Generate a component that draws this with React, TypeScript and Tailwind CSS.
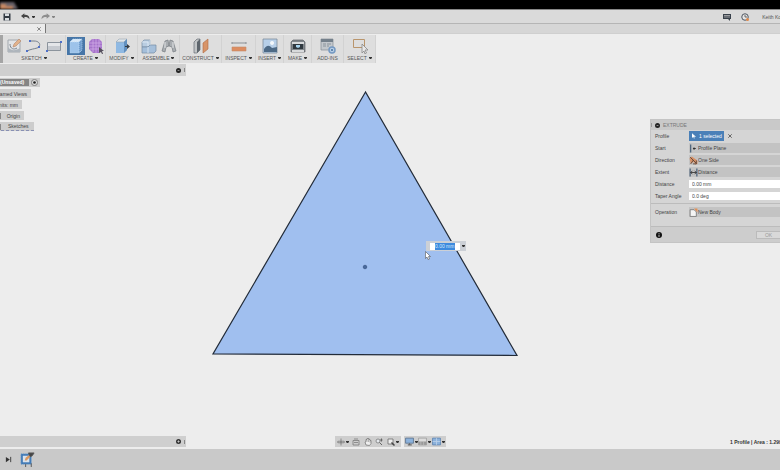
import type { ReactNode } from 'react'

const Caret = () => (
  <svg viewBox="0 0 3 2" className="w-[3px] h-[2px] shrink-0">
    <path d="M0 0h3v1L2 2H1L0 1z" fill="#333" />
  </svg>
)

const Icon = ({ children, className = 'size-4' }: { children: ReactNode; className?: string }) => (
  <svg viewBox="0 0 16 16" className={`${className} shrink-0`} fill="none">{children}</svg>
)

const icons = {
  sketch: (
    <Icon>
      <path d="M2 2h12v12H2z" fill="#e2e4e6" stroke="#a2a8ae" />
      <path d="M2 9c3 4 7 4 12 1v4H2z" fill="#aeb5bc" />
      <path d="M4 6c0 5 4 6 7 4" stroke="#7d868f" />
      <path d="m7 9 1-3 5-5 2 2-5 5z" fill="#e2b38c" stroke="#b5876a" strokeWidth=".6" />
    </Icon>
  ),
  spline: (
    <Icon>
      <path d="M4 3h4c7 0 7 6 3 7-3 1-6 1-10 3" stroke="#76818c" />
      <path d="M3 2h2v2H3zM12 8h2v2h-2zM0 12h2v2H0z" fill="#4f70c8" />
    </Icon>
  ),
  rectangle: (
    <Icon>
      <path d="M1.500 4.500h13v8h-13z" fill="#c6cad0" stroke="#8c949d" />
      <path d="M2 5h12v3H2z" fill="#e4e6e9" />
      <path d="M14 3h2v2h-2zM0 12h2v2H0z" fill="#4f70c8" />
    </Icon>
  ),
  box: (
    <Icon>
      <path d="m2 4 3-3h9v11l-3 3H2z" fill="#9dc3ea" />
      <path d="m2 4 3-3h9l-3 3z" fill="#d8e9f8" />
      <path d="m11 4 3-3v11l-3 3z" fill="#6f9dce" />
      <path d="m2 4 3-3h9v11l-3 3H2zM2 4h9v11M11 4l3-3" stroke="#bddaf4" strokeWidth=".7" strokeDasharray="1 1" />
    </Icon>
  ),
  form: (
    <Icon>
      <path d="M4 1h7l3 3v7l-3 4H5l-4-4V4z" fill="#a673cb" />
      <path d="M1 5h13M1 8h13M2 11h12M5 1v13M8 1v14M11 1v13" stroke="#d3b0ea" strokeWidth=".7" />
      <path d="M11 9v6l2-1 1 2h1l-1-3h2z" fill="#56505e" />
    </Icon>
  ),
  modify: (
    <Icon>
      <path d="m2 4 3-3h8v11l-3 3H2z" fill="#8fb9e3" />
      <path d="m2 4 3-3h8l-3 3z" fill="#dfe5ea" stroke="#9aa4ae" strokeWidth=".6" />
      <path d="m10 4 3-3v11l-3 3z" fill="#6290bf" />
      <path d="M11 8h2V6l3 2.500-3 2.500V9h-2z" fill="#353b42" />
    </Icon>
  ),
  assemble: (
    <Icon>
      <path d="m1 4 2-2h6v6l-2 1H1z" fill="#b9cde1" stroke="#758ca3" strokeWidth=".7" />
      <path d="M1 9h6l2-2h6v6l-2 2H1z" fill="#a5bfda" stroke="#758ca3" strokeWidth=".7" />
      <path d="M7 9v6M1 4h6v4M9 2v5" stroke="#e3edf7" strokeWidth=".8" />
    </Icon>
  ),
  joint: (
    <Icon>
      <path d="m1 13 3-10 3-1 1 6-3 1-1 5zM15 13 12 3 9 2 8 8l3 1 1 5z" fill="#a9adb1" stroke="#777d83" strokeWidth=".7" />
      <path d="M4 4v6M12 4v6" stroke="#e3e5e7" />
    </Icon>
  ),
  construct: (
    <Icon>
      <path d="m1 4 3-3h3v11l-3 3H1z" fill="#c2c5c7" stroke="#555d64" strokeWidth=".6" />
      <path d="M4 4 7 1v11l-3 3z" fill="#5e666d" />
      <path d="m10 5 5-4v10l-5 4z" fill="#d89468" stroke="#ae6a43" strokeWidth=".6" />
    </Icon>
  ),
  inspect: (
    <Icon>
      <path d="M1 5h14M1 4v2M15 4v2" stroke="#8b9196" />
      <path d="M1 9h14v4H1z" fill="#dc8d61" stroke="#c58a6a" strokeWidth=".6" />
    </Icon>
  ),
  insert: (
    <Icon>
      <path d="M1 1h14v14H1z" fill="#b7cfe8" stroke="#7f8e9d" strokeWidth=".8" />
      <path d="M2 11c3-4 5-4 8-1l5-1v5H2z" fill="#4d6a86" />
      <path d="M10 3a2 2 0 1 0 .1 0z" fill="#f2f7fb" />
    </Icon>
  ),
  make: (
    <Icon>
      <path d="M1 4 3 2h10l2 2v10H1z" fill="#80868b" stroke="#5e6368" strokeWidth=".7" />
      <path d="M2 4h12v2H2zM2 12h12v2H2z" fill="#d8dadc" />
      <path d="M3 6h10v5H3z" fill="#2f383f" />
      <path d="M6 7h4v2l-2 1-2-1z" fill="#a7d3ee" />
    </Icon>
  ),
  addins: (
    <Icon>
      <path d="M1 1h12v11H1z" fill="#c3c8cd" stroke="#858d95" strokeWidth=".7" />
      <path d="M1 1h12v3H1z" fill="#74808b" />
      <path d="M3 6h3M3 8h3M7 6h4M7 8h2" stroke="#8a939b" />
      <circle cx="12" cy="12" r="3" fill="#b8cee6" stroke="#7499c2" strokeWidth="1.500" />
      <circle cx="12" cy="12" r="1" fill="#47719d" />
    </Icon>
  ),
  select: (
    <Icon>
      <path d="M1.500 1.500h11v8h-11z" stroke="#b9956c" />
      <path d="M10 6v9l2-2 1 3 1.500-1L13 12h3z" fill="#e8e8e8" stroke="#888" strokeWidth=".8" />
    </Icon>
  ),
}

type Group = { label: string; width: string; tools: { name: string; icon: ReactNode; active?: boolean }[] }

const groups: Group[] = [
  {
    label: 'SKETCH',
    width: 'w-[63px]',
    tools: [
      { name: 'Create Sketch', icon: icons.sketch },
      { name: 'Spline', icon: icons.spline },
      { name: 'Rectangle', icon: icons.rectangle },
    ],
  },
  {
    label: 'CREATE',
    width: 'w-10',
    tools: [
      { name: 'Extrude', icon: icons.box, active: true },
      { name: 'Create Form', icon: icons.form },
    ],
  },
  { label: 'MODIFY', width: 'w-8', tools: [{ name: 'Press Pull', icon: icons.modify }] },
  {
    label: 'ASSEMBLE',
    width: 'w-[42px]',
    tools: [
      { name: 'New Component', icon: icons.assemble },
      { name: 'Joint', icon: icons.joint },
    ],
  },
  { label: 'CONSTRUCT', width: 'w-[42px]', tools: [{ name: 'Offset Plane', icon: icons.construct }] },
  { label: 'INSPECT', width: 'w-[34px]', tools: [{ name: 'Measure', icon: icons.inspect }] },
  { label: 'INSERT', width: 'w-7', tools: [{ name: 'Decal', icon: icons.insert }] },
  { label: 'MAKE', width: 'w-7', tools: [{ name: '3D Print', icon: icons.make }] },
  { label: 'ADD-INS', width: 'w-8', tools: [{ name: 'Scripts', icon: icons.addins }] },
  { label: 'SELECT', width: 'w-8', tools: [{ name: 'Select', icon: icons.select }] },
]

const Toolbar = () => (
  <nav className="flex self-start h-7 mt-px bg-[#dedede] shrink-0 pointer-events-auto">
    <div className="w-[3px] bg-[#a5a5a5]" />
    {groups.map((g) => (
      <div key={g.label} className={`${g.width} flex flex-col items-center justify-between pt-[2px] pb-[2px] border-r border-[#d2d2d2]`}>
        <div className="flex justify-center gap-[2px]">
          {g.tools.map((t) => (
            <button
              key={t.name}
              aria-label={t.name}
              className={`flex items-center justify-center h-[18px] w-[18px] ${t.active ? 'bg-[#4676a8]' : ''}`}
            >
              {t.icon}
            </button>
          ))}
        </div>
        <button className="flex items-center gap-[2px] leading-[6px] text-[#555]">
          {g.label}
          {g.label !== 'ADD-INS' && <Caret />}
        </button>
      </div>
    ))}
  </nav>
)

const PanelBar = ({ label, icon, className }: { label: string; icon: ReactNode; className: string }) => (
  <div className={`${className} flex items-center justify-end bg-[#cfcfcf] pr-px gap-[3px]`}>
    <button aria-label={label}>{icon}</button>
    <div className="w-px h-1 bg-[#888]" />
  </div>
)

const Chip = ({ width, children }: { width: string; children: ReactNode }) => (
  <div className={`${width} flex items-center justify-end h-[9px] overflow-hidden whitespace-nowrap bg-[#cdcdcd]`}>
    {children}
  </div>
)

const Browser = () => (
  <section>
    <PanelBar
      label="Browser options"
      className="h-3"
      icon={
        <Icon className="size-[5px]">
          <circle cx="8" cy="8" r="8" fill="#222" />
          <path d="M5 8h6" stroke="#ccc" strokeWidth="2" />
        </Icon>
      }
    />
    <div className="flex flex-col gap-[2px] pt-[2px]">
      <Chip width="w-10">
        <span className="w-[29px] h-[7px] leading-[7px] bg-[#858585] text-white font-bold">(Unsaved)</span>
        <button aria-label="Activate component" className="mx-[2px]">
          <Icon className="size-[7px]">
            <circle cx="8" cy="8" r="7" fill="#ddd" stroke="#777" strokeWidth="2" />
            <circle cx="8" cy="8" r="3" fill="#222" />
          </Icon>
        </button>
      </Chip>
      <Chip width="w-[31px]"><span className="pr-1">Named Views</span></Chip>
      <Chip width="w-[22px]"><span className="pr-1">Units: mm</span></Chip>
      <Chip width="w-6">
        <span className="mr-auto w-px h-[6px] bg-[#888]" />
        <span className="pr-1">Origin</span>
      </Chip>
      <Chip width="w-[34px]">
        <span className="mr-auto w-px h-[6px] bg-[#888]" />
        <span className="w-full pl-[7px] leading-[8px] border-b border-dashed border-[#8890b4]">Sketches</span>
      </Chip>
    </div>
  </section>
)

const SketchCanvas = () => (
  <svg className="absolute inset-0 w-full h-full" fill="none">
    <path d="M365.500 58 213 320l304 1.500z" fill="#a0bfef" stroke="#222b38" strokeWidth="1.200" />
    <circle cx="365" cy="233" r="1.800" fill="#48699c" stroke="#2f4a78" strokeWidth=".6" />
  </svg>
)

const DimensionInput = () => (
  <div className="absolute left-[426px] top-[207px]">
    <div className="flex items-center h-[10px] w-10 bg-[#ccd0d6] pl-1 pr-px gap-[2px]">
      <div className="flex-1 h-[7px] bg-white px-[5px]">
        <input
          aria-label="Distance on canvas"
          defaultValue="0.00 mm"
          className="block w-full h-[7px] leading-[7px] bg-[#3d8ade] text-[#d7e9fb] outline-none"
        />
      </div>
      <button aria-label="Expression options"><Caret /></button>
    </div>
    <svg viewBox="0 0 6 9" className="w-[6px] h-[9px] -ml-px">
      <path d="M.5.500v7l1.500-1.500 1 2.500 1.500-.5-1-2.500h2z" fill="#fff" stroke="#555" strokeWidth=".6" />
    </svg>
  </div>
)

const startIcon = (
  <Icon className="size-[9px]">
    <path d="M3 1v14" stroke="#3f5873" strokeWidth="2" />
    <path d="M7 8h5M9 6v4" stroke="#333" strokeWidth="2" />
  </Icon>
)
const directionIcon = (
  <Icon className="size-[9px]">
    <path d="m1 4 4-3 10 7v6l-4 1-3-5-5 4z" fill="#d79167" />
    <path d="m2 2 11 11M3 14l5-7M13 8v6H7" stroke="#55433a" strokeWidth="1.500" />
  </Icon>
)
const extentIcon = (
  <Icon className="size-[9px]">
    <path d="M2 1v14M14 1v14" stroke="#3f5873" strokeWidth="2" />
    <path d="M3 8h10M6 5 3 8l3 3M10 5l3 3-3 3" stroke="#333" strokeWidth="1.500" />
  </Icon>
)
const bodyIcon = (
  <Icon className="size-[9px]">
    <path d="M2 3h7l4 4v8H2z" fill="#f5f5f5" stroke="#777" strokeWidth="1.500" />
    <path d="M9 1h6v7z" fill="#e39056" />
  </Icon>
)

const Row = ({ id, label, children }: { id: string; label: string; children: ReactNode }) => (
  <div className="flex items-center h-3 pl-1">
    <label htmlFor={id} className="w-[34px] shrink-0">{label}</label>
    {children}
  </div>
)

const Choice = ({ id, label, value, icon }: { id: string; label: string; value: string; icon: ReactNode }) => (
  <Row id={id} label={label}>
    <div className="flex flex-1 items-center h-[10px] bg-[#c3c3c3]">
      {icon}
      <select id={id} className="flex-1 appearance-none h-[10px] leading-[10px] outline-none">
        <option>{value}</option>
      </select>
    </div>
  </Row>
)

const Field = ({ id, label, value }: { id: string; label: string; value: string }) => (
  <Row id={id} label={label}>
    <input id={id} defaultValue={value} className="flex-1 min-w-0 h-2 pl-[3px] leading-[8px] bg-white outline-none" />
  </Row>
)

const ExtrudeDialog = () => (
  <form className="w-[130px] mt-[55px] bg-[#d5d5d5] border border-r-0 border-[#c4c4c4] pointer-events-auto">
    <h2 className="flex items-center h-[10px] gap-[3px] bg-[#c9c9c9] text-[#777]">
      <span className="w-px h-1 bg-[#999]" />
      <Icon className="size-[5px]">
        <circle cx="8" cy="8" r="8" fill="#222" />
        <path d="M5 8h6" stroke="#ccc" strokeWidth="2" />
      </Icon>
      EXTRUDE
    </h2>
    <Row id="profile" label="Profile">
      <button id="profile" type="button" className="flex items-center gap-[3px] w-[35px] h-[10px] pl-[3px] bg-[#4a80b8] text-white whitespace-nowrap">
        <svg viewBox="0 0 6 8" className="w-1 h-[6px]"><path d="M0 0v7l2-2 1 3 1-1-1-2h3z" fill="#fff" /></svg>
        1 selected
      </button>
      <button type="button" aria-label="Clear selection" className="ml-1">
        <Icon className="size-1"><path d="m1 1 14 14M15 1 1 15" stroke="#444" strokeWidth="3" /></Icon>
      </button>
    </Row>
    <Choice id="start" label="Start" value="Profile Plane" icon={startIcon} />
    <Choice id="direction" label="Direction" value="One Side" icon={directionIcon} />
    <Choice id="extent" label="Extent" value="Distance" icon={extentIcon} />
    <Field id="distance" label="Distance" value="0.00 mm" />
    <Field id="taper" label="Taper Angle" value="0.0 deg" />
    <div className="mt-px pt-[2px] pb-2 border-t border-[#bcbcbc]">
      <Choice id="operation" label="Operation" value="New Body" icon={bodyIcon} />
    </div>
    <div className="flex items-center justify-between h-4 pl-[5px] bg-[#cdcdcd] border-t border-[#bcbcbc]">
      <button type="button" aria-label="Information">
        <Icon className="size-[6px]">
          <circle cx="8" cy="8" r="8" fill="#111" />
          <path d="M8 3v2M8 7v6" stroke="#fff" strokeWidth="2" />
        </Icon>
      </button>
      <button type="button" disabled className="w-6 h-2 leading-[6px] bg-[#d9d9d9] border border-r-0 border-[#bbb] text-[#999]">OK</button>
    </div>
  </form>
)

const viewTools = [
  {
    name: 'Orbit',
    caret: true,
    icon: <Icon className="size-2"><path d="M8 1v14M1 8h14M4 5 1 8l3 3M12 5l3 3-3 3" stroke="#777" strokeWidth="1.500" /><circle cx="8" cy="8" r="3" fill="#888" /></Icon>,
  },
  {
    name: 'Look At',
    icon: <Icon className="size-2"><path d="M2 5h12v9H2zM4 2h8M4 9h8" stroke="#777" strokeWidth="1.500" /></Icon>,
  },
  {
    name: 'Pan',
    icon: <Icon className="size-2"><path d="M4 14 2 8l2-1V3h2V1h4v2h2v2h2v6l-3 4z" fill="#eee" stroke="#777" strokeWidth="1.500" /><path d="M6 3v5M9 2v6M12 5v4" stroke="#777" /></Icon>,
  },
  {
    name: 'Zoom',
    icon: <Icon className="size-2"><circle cx="6" cy="6" r="4" fill="#e4e8ec" stroke="#777" strokeWidth="1.500" /><path d="m9 9 5 5M13 1v6M10 4h5" stroke="#666" strokeWidth="2" /></Icon>,
  },
  {
    name: 'Fit',
    caret: true,
    icon: <Icon className="size-2"><path d="M2 2h10v10H2z" fill="#eee" stroke="#666" strokeWidth="1.500" /><path d="m9 9 6 6" stroke="#444" strokeWidth="3" /></Icon>,
  },
]

const displayTools = [
  {
    name: 'Display Settings',
    icon: <Icon className="size-[9px]"><path d="M1 2h14v9H1z" fill="#8cb2dc" stroke="#5c7490" strokeWidth="1.500" /><path d="M5 14h7M8 11v3" stroke="#666" strokeWidth="2" /></Icon>,
  },
  {
    name: 'Grid and Snaps',
    icon: <Icon className="size-[9px]"><path d="M1 2h14v12H1z" fill="#ddd" stroke="#888" /><path d="M1 8h14v6H1z" fill="#999" /><path d="M5 8v6M10 8v6" stroke="#ccc" /></Icon>,
  },
  {
    name: 'Viewports',
    icon: <Icon className="size-[9px]"><path d="M1 2h14v12H1z" fill="#8cb2dc" stroke="#5f86b4" strokeWidth="1.500" /><path d="M8 2v12M1 8h14" stroke="#b9d0ea" strokeWidth="1.500" /></Icon>,
  },
]

const NavigationBar = () => (
  <div className="flex gap-[3px] h-[11px] pointer-events-auto">
    <div className="flex items-center justify-between w-[66px] px-[2px] bg-[#cecece]">
      {viewTools.map((t) => (
        <button key={t.name} aria-label={t.name} className="flex items-center gap-px">
          {t.icon}
          {t.caret && <Caret />}
        </button>
      ))}
    </div>
    <div className="flex items-center justify-between w-[42px] px-px bg-[#cecece]">
      {displayTools.map((t) => (
        <button key={t.name} aria-label={t.name} className="flex items-center gap-px">
          {t.icon}
          <Caret />
        </button>
      ))}
    </div>
  </div>
)

const QuickBar = () => (
  <header className="flex items-center h-[15px] shrink-0 px-[3px] bg-[#dadada] border-t border-b border-t-[#888] border-b-[#b5b5b5] overflow-hidden">
    <button aria-label="Save">
      <Icon className="size-2">
        <path d="M1 1h14v14H1z" fill="#333b44" />
        <path d="M4 1h8v5H4zM4 10h8v5H4z" fill="#d9dde1" />
      </Icon>
    </button>
    <button aria-label="Undo" className="flex items-center gap-[2px] ml-[10px]">
      <Icon className="size-[9px]"><path d="M0 7 6 2v3c6 0 9 2 9 8-2-3-4-4-9-4v3z" fill="#444" /></Icon>
      <Caret />
    </button>
    <button aria-label="Redo" className="flex items-center gap-[2px] ml-[6px] opacity-50">
      <Icon className="size-[9px]"><path d="m16 7-6-5v3C4 5 1 7 1 13c2-3 4-4 9-4v3z" fill="#444" /></Icon>
      <Caret />
    </button>
    <div className="ml-auto flex items-center -mr-2 whitespace-nowrap text-[#555]">
      <button aria-label="Comments" className="mr-[10px]">
        <Icon className="size-2"><path d="M0 2h16v10h-2v4l-4-4H0z" fill="#39414b" /><path d="M2 5h12M2 8h12" stroke="#bbb" strokeWidth="1.500" /></Icon>
      </button>
      <button aria-label="Job status" className="mr-[13px]">
        <Icon className="size-2">
          <circle cx="8" cy="8" r="6.500" fill="#e5e5e5" stroke="#4d5660" strokeWidth="2" />
          <path d="M8 4v4h4" stroke="#444" strokeWidth="1.500" />
          <circle cx="13" cy="13" r="3" fill="#e18a4c" />
        </Icon>
      </button>
      <a href="#account">Keith Kolb</a>
    </div>
  </header>
)

const App = () => (
  <div className="flex flex-col h-screen overflow-hidden bg-[#ededed] text-[5px] leading-[6px] text-[#444] font-['Liberation_Sans',Arial,sans-serif]">
    <div className="h-[9px] shrink-0 overflow-hidden bg-black">
      <svg className="w-5 h-[9px] blur-[1px]">
        <path d="M0 2h14l4 7H0z" fill="#655f66" />
        <path d="M0 4h6v2h7v3H0z" fill="#c58863" />
      </svg>
    </div>
    <QuickBar />
    <div className="flex h-[10px] shrink-0 bg-[#d6d6d6] border-b border-[#cfcfcf]">
      <div className="flex items-center justify-end w-[46px] pr-1 bg-[#ebebeb] border-r border-[#777]">
        <button aria-label="Close tab">
          <Icon className="size-1"><path d="m1 1 14 14M15 1 1 15" stroke="#666" strokeWidth="3" /></Icon>
        </button>
      </div>
    </div>
    <main className="relative flex flex-col flex-1 min-h-0">
      <SketchCanvas />
      <div className="relative flex flex-col flex-1 pointer-events-none">
        <Toolbar />
        <div className="flex flex-1 pt-px pb-[2px]">
          <div className="flex flex-col justify-between w-[186px] shrink-0 pointer-events-auto">
            <Browser />
            <PanelBar
              label="Comments panel"
              className="h-[11px]"
              icon={
                <Icon className="size-[5px]">
                  <circle cx="8" cy="8" r="8" fill="#333" />
                  <path d="M8 4v8M4 8h8" stroke="#ddd" strokeWidth="2" />
                </Icon>
              }
            />
          </div>
          <div className="flex flex-1 items-end justify-center">
            <NavigationBar />
          </div>
          <div className="flex flex-col items-end justify-between w-[186px] shrink-0 overflow-hidden">
            <ExtrudeDialog />
            <p className="w-[50px] pb-[2px] whitespace-nowrap font-bold text-[#333]">1 Profile | Area : 1.299 cm^2</p>
          </div>
        </div>
      </div>
      <DimensionInput />
    </main>
    <footer className="flex items-center gap-2 h-[21px] shrink-0 pl-[5px] bg-[#c9c9c9]">
      <button aria-label="Go to end">
        <Icon className="size-[7px]"><path d="m2 2 9 6-9 6z" fill="#333" /><path d="M13 2v12" stroke="#333" strokeWidth="2" /></Icon>
      </button>
      <button aria-label="Sketch1">
        <Icon className="size-[15px]">
          <path d="M1 2h11v11H1z" fill="#3f78b4" stroke="#6b9bcc" strokeDasharray="1 1" />
          <path d="M3 4h7v7H3z" fill="#d8e2ec" />
          <path d="m5 9 1-3 4-3 1 2-4 4z" fill="#d99860" />
          <path d="M9 1h6l-2 3-2 1zM6 13v3M12 12v4" fill="#444" stroke="#555" />
        </Icon>
      </button>
    </footer>
  </div>
)

export default App
